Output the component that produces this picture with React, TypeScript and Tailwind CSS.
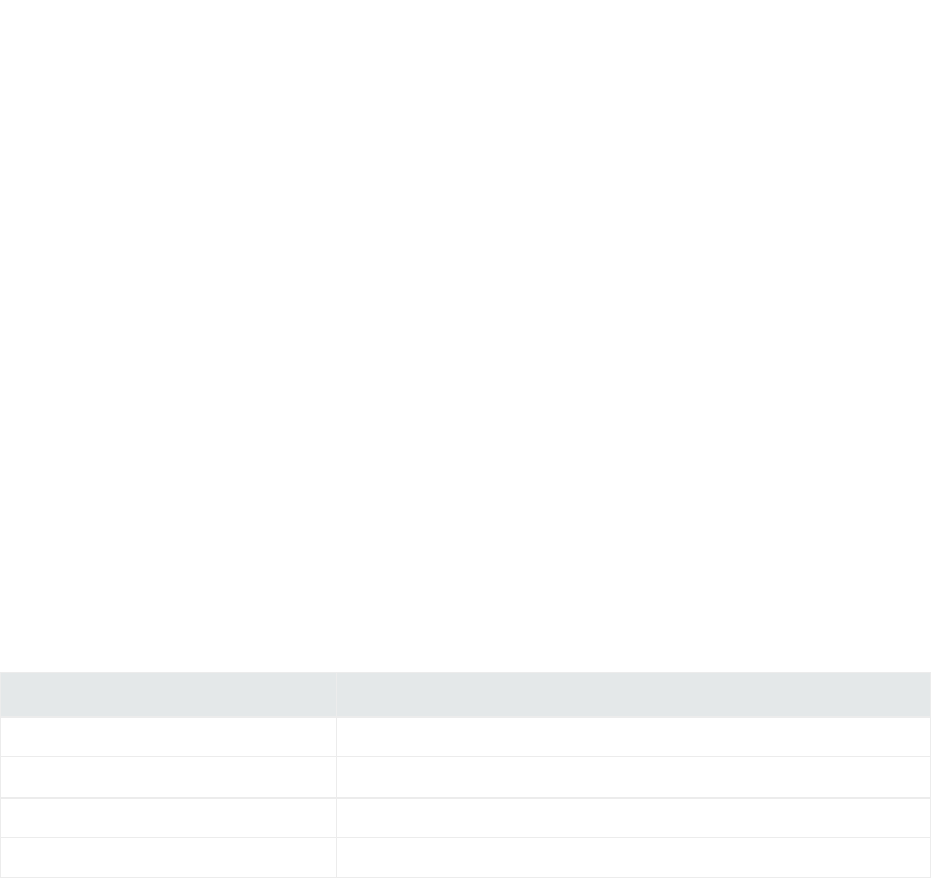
const rows = [0, 1, 2, 3]

export default function App() {
  return (
    <div className="min-h-screen bg-white font-['Liberation_Sans',sans-serif]">
      {/* empty page area above the table */}
      <div className="h-[672px]" />

      <table className="w-[931px] border-collapse table-fixed">
        <colgroup>
          <col className="w-[336px]" />
          <col />
        </colgroup>
        <thead>
          <tr className="h-[44px] bg-[#e4e8e9]">
            <th className="border border-[#ececec] border-b-2" />
            <th className="border border-[#ececec] border-b-2" />
          </tr>
        </thead>
        <tbody>
          {rows.map((r) => (
            <tr key={r} className={r === 1 ? 'h-[41px]' : 'h-[40px]'}>
              <td className={`border border-[#ececec] ${r === 1 ? 'border-b-2' : ''}`} />
              <td className={`border border-[#ececec] ${r === 1 ? 'border-b-2' : ''}`} />
            </tr>
          ))}
        </tbody>
      </table>
    </div>
  )
}
